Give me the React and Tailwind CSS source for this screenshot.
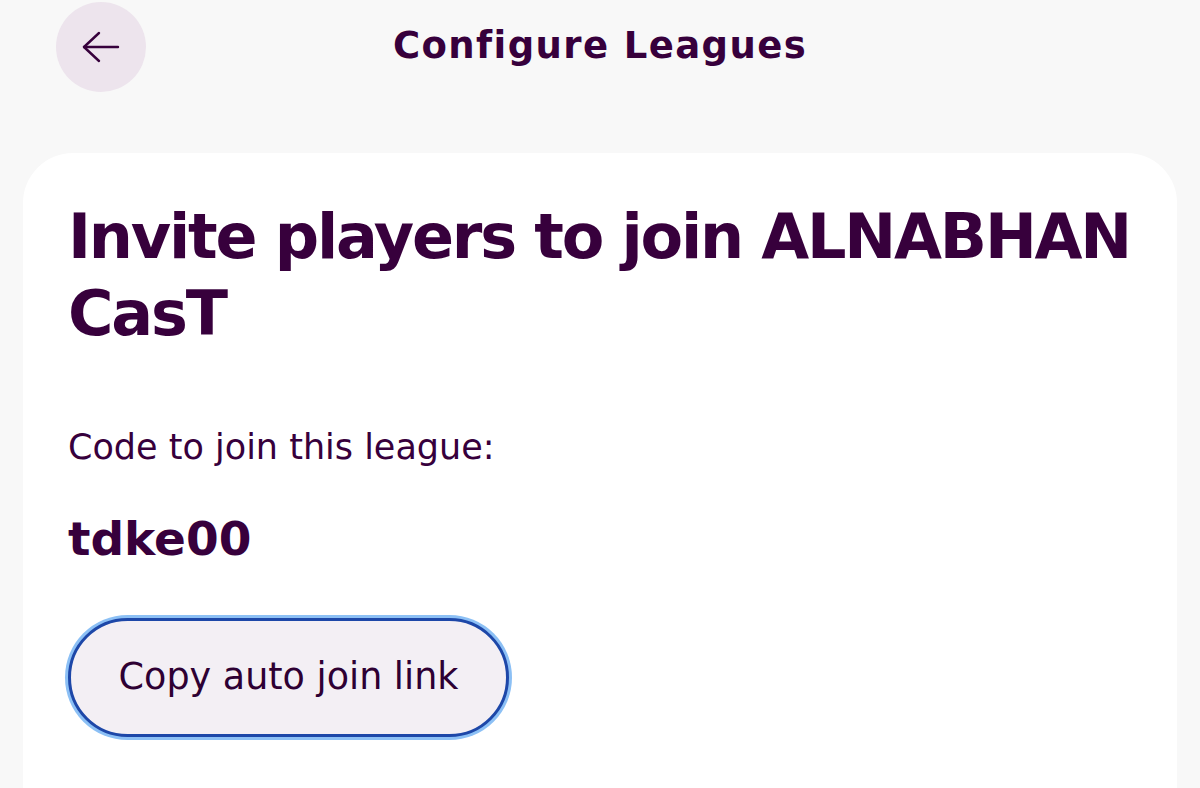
function BackArrow() {
  return (
    <svg width="40" height="40" viewBox="0 0 40 40" fill="none" stroke="#37003c" strokeWidth="2.4" strokeLinecap="round" strokeLinejoin="round">
      <path d="M37 20H3" />
      <path d="M18 6 3 20l15 14" />
    </svg>
  );
}

function App() {
  return (
    <div
      className="w-[1200px] h-[788px] overflow-hidden bg-[#f8f8f8] text-[#37003c]"
      style={{ fontFamily: "'DejaVu Sans', 'Noto Sans', sans-serif" }}
    >
      {/* Header */}
      <div className="relative h-[95px] flex items-center justify-center">
        <button className="absolute left-[56px] top-[2px] w-[90px] h-[90px] rounded-full bg-[#ede4ed] flex items-center justify-center">
          <BackArrow />
        </button>
        <h1 className="text-[37px] font-bold tracking-[1.4px] -mt-[4px]">Configure Leagues</h1>
      </div>

      {/* Card */}
      <div className="mx-[23px] mt-[58px] bg-white rounded-t-[50px] h-[700px] pl-[45px] pr-[15px] pt-[45px]">
        <h2 className="text-[62px] font-bold leading-[77px] tracking-[-2.2px]">
          Invite players to join ALNABHAN CasT
        </h2>
        <p className="mt-[73px] text-[35px] font-normal leading-[44px]">
          Code to join this league:
        </p>
        <p className="mt-[42px] text-[47px] font-bold leading-[56px]">tdke00</p>
        <button className="mt-[51px] w-[441px] h-[119px] rounded-full bg-[#f3eff4] border-[3px] border-[#1d47a8] ring-[3px] ring-[#8cc0f5] text-[36.5px] font-normal text-[#2e0033]">
          Copy auto join link
        </button>
      </div>
    </div>
  );
}

export default App;
